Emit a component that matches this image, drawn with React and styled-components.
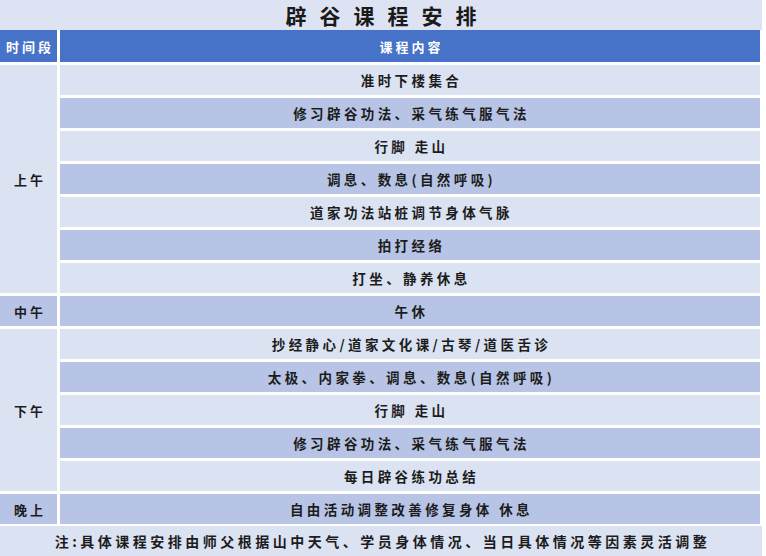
import styled, { createGlobalStyle } from 'styled-components';

const GlobalStyle = createGlobalStyle`
  body {
    margin: 0;
    background: #ffffff;
    font-family: "Noto Sans CJK SC", "Noto Sans", sans-serif;
    color: #1c1c1c;
  }
`;

const schedule = [
  {
    label: '上午',
    items: [
      '准时下楼集合',
      '修习辟谷功法、采气练气服气法',
      '行脚 走山',
      '调息、数息(自然呼吸)',
      '道家功法站桩调节身体气脉',
      '拍打经络',
      '打坐、静养休息',
    ],
  },
  { label: '中午', items: ['午休'] },
  {
    label: '下午',
    items: [
      '抄经静心/道家文化课/古琴/道医舌诊',
      '太极、内家拳、调息、数息(自然呼吸)',
      '行脚 走山',
      '修习辟谷功法、采气练气服气法',
      '每日辟谷练功总结',
    ],
  },
  { label: '晚上', items: ['自由活动调整改善修复身体 休息'] },
];

const App = () => {
  let row = 2;
  let index = 0;
  const cells = [];
  schedule.forEach((group) => {
    const start = row;
    const groupIndex = index;
    cells.push(
      <Period
        key={group.label}
        $row={start}
        $span={group.items.length}
        $dark={group.items.length === 1}
      >
        {group.label}
      </Period>
    );
    group.items.forEach((item, i) => {
      cells.push(
        <Cell key={group.label + i} $row={start + i} $dark={(groupIndex + i) % 2 === 1}>
          {item}
        </Cell>
      );
    });
    index += group.items.length;
    row += group.items.length;
  });

  return (
    <>
      <GlobalStyle />
      <Page>
        <Title>辟谷课程安排</Title>
        <Table>
          <HeadCell>时间段</HeadCell>
          <HeadCell>课程内容</HeadCell>
          {cells}
        </Table>
        <Note>注:具体课程安排由师父根据山中天气、学员身体情况、当日具体情况等因素灵活调整</Note>
      </Page>
    </>
  );
};

const Page = styled.div`
  width: 762px;
  display: flex;
  flex-direction: column;
`;

const Title = styled.div`
  height: 30px;
  background: #dde3f2;
  display: flex;
  align-items: center;
  justify-content: center;
  font-size: 21px;
  font-weight: 700;
  letter-spacing: 13px;
  padding-left: 13px;
  color: #1a1a1a;
`;

const Table = styled.div`
  width: 760px;
  display: grid;
  grid-template-columns: 57px 700px;
  grid-template-rows: 32px;
  grid-auto-rows: 30px;
  column-gap: 3px;
  row-gap: 3px;
`;

const HeadCell = styled.div`
  background: #4672c8;
  color: #ffffff;
  display: flex;
  align-items: center;
  justify-content: center;
  font-size: 13px;
  font-weight: 700;
  letter-spacing: 3px;
  padding-left: 3px;
`;

const Period = styled.div`
  grid-column: 1;
  grid-row: ${(p) => p.$row} / span ${(p) => p.$span};
  background: ${(p) => (p.$dark ? '#b7c4e5' : '#dbe2f2')};
  display: flex;
  align-items: center;
  justify-content: center;
  font-size: 13px;
  font-weight: 700;
  letter-spacing: 3px;
  padding-left: 3px;
`;

const Cell = styled.div`
  grid-column: 2;
  grid-row: ${(p) => p.$row};
  background: ${(p) => (p.$dark ? '#b7c4e5' : '#dbe2f2')};
  display: flex;
  align-items: center;
  justify-content: center;
  font-size: 13.5px;
  font-weight: 700;
  letter-spacing: 3.4px;
  padding-left: 3px;
`;

const Note = styled.div`
  margin-top: 2px;
  height: 30px;
  background: #dbe2f2;
  display: flex;
  align-items: center;
  justify-content: center;
  font-size: 14px;
  font-weight: 700;
  letter-spacing: 3.5px;
  padding-left: 3px;
`;

export default App;
